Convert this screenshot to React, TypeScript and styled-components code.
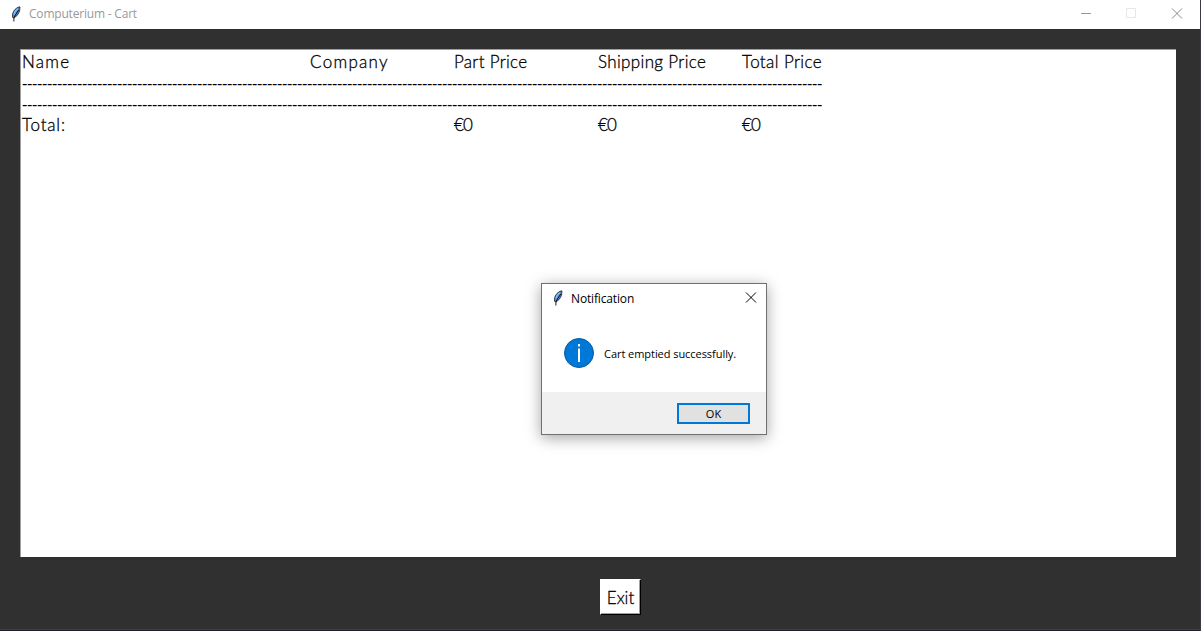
import React from "react";
import styled, { createGlobalStyle } from "styled-components";

const Global = createGlobalStyle`
  * { box-sizing: border-box; }
  html, body { margin: 0; height: 100%; overflow: hidden; background: #303030; }
`;

const Window = styled.main`
  width: 1201px;
  height: 631px;
  display: flex;
  flex-direction: column;
  background: #303030;
  border-right: 1px solid #3a3946;
  position: relative;
`;

const TitleBar = styled.header`
  height: 29px;
  flex: none;
  display: flex;
  align-items: center;
  padding: 0 17px 2px 10px;
  background: #fff;
`;

const Label = styled.span<{ $spacing?: number; $size?: number; $color?: string }>`
  font-family: "Open Sans", "Noto Sans", sans-serif;
  font-size: ${(p) => p.$size ?? 12}px;
  line-height: 16px;
  letter-spacing: ${(p) => p.$spacing ?? 0}px;
  color: ${(p) => p.$color ?? "#000"};
  white-space: pre;
`;

const WindowControls = styled.div`
  margin-left: auto;
  display: flex;
  gap: 34px;
`;

const Body = styled.section`
  flex: 1;
  display: flex;
  flex-direction: column;
  align-items: center;
  padding: 20px 24px 0 20px;
`;

const CartText = styled.div`
  width: 1156px;
  height: 508px;
  align-self: flex-start;
  padding: 2px 1px;
  background: #fff;
  border-top: 1px solid #a0a0a0;
  border-left: 1px solid #a0a0a0;
`;

const Row = styled.div`
  display: grid;
  grid-template-columns: 288px 144px 144px 144px 144px;
  height: 21px;
`;

const Cell = styled.span<{ $column?: number; $spacing?: number }>`
  grid-column: ${(p) => p.$column ?? "auto"};
  font-family: Lato, sans-serif;
  font-size: 17px;
  font-weight: 300;
  line-height: 19px;
  letter-spacing: ${(p) => p.$spacing ?? 0}px;
  color: #000;
  white-space: pre;
  -webkit-text-stroke: 0.3px #000;
`;

const Rule = styled.div`
  height: 21px;
  font-family: "Liberation Sans", sans-serif;
  font-size: 16px;
  line-height: 21px;
  letter-spacing: -0.328px;
  white-space: pre;
`;

const ExitButton = styled.button`
  width: 41px;
  height: 36px;
  margin: 22px 0 0 44px;
  padding: 2px 0 0 1px;
  border: 1px solid;
  border-color: #fff #000 #000 #fff;
  box-shadow: inset -1px -1px #a0a0a0;
  background: #fff;
  color: #000;
  font-family: Lato, sans-serif;
  font-size: 17px;
  font-weight: 300;
  line-height: 32px;
  -webkit-text-stroke: 0.3px #000;
`;

const Taskbar = styled.footer`
  height: 2px;
  background: #211c2c;
  border-top: 1px solid #403e49;
`;

const Dialog = styled.div`
  position: absolute;
  left: 541px;
  top: 283px;
  width: 226px;
  height: 152px;
  display: flex;
  flex-direction: column;
  background: #fff;
  border: 1px solid #707070;
  box-shadow: 0 3px 14px rgba(0, 0, 0, 0.36);
`;

const DialogTitle = styled.div`
  height: 30px;
  display: flex;
  align-items: center;
  padding: 0 9px 2px 10px;

  ${Label} {
    padding-top: 2px;
  }
`;

const DialogClose = styled.div`
  margin-left: auto;
  display: flex;
`;

const Message = styled.div`
  flex: 1;
  display: flex;
  align-items: center;
  gap: 10px;
  padding: 0 0 0 22px;

  ${Label} {
    padding-top: 2px;
  }
`;

const Actions = styled.div`
  height: 42px;
  display: flex;
  justify-content: flex-end;
  align-items: center;
  padding-right: 16px;
  background: #f0f0f0;
`;

const OkButton = styled.button`
  width: 73px;
  height: 21px;
  padding: 2px 0 0;
  border: 2px solid #0078d7;
  background: #e1e1e1;
  display: flex;
  align-items: center;
  justify-content: center;
`;

const Feather = styled.svg`
  width: 12px;
  height: 16px;
  margin-right: 7px;
  flex: none;
`;

function FeatherIcon() {
  return (
    <Feather viewBox="0 0 12 16">
      <path d="M9.500 .8C6.300 1.500 3.300 4.500 2.500 8.200L2.500 11.300L4.300 11.800L7.300 9.300L9.500 5.500L10 1Z" fill="#4c8ad2" stroke="#20242c" strokeWidth=".8" />
      <path d="M7.800 2.600L5.200 5.400L4 8.500" stroke="#8fc1f5" strokeWidth="1.300" fill="none" />
      <path d="M8.800 4L5.500 8.800L3.900 12V15.500" stroke="#000" strokeWidth=".9" fill="none" />
    </Feather>
  );
}

function CloseIcon({ color }: { color: string }) {
  return (
    <svg width="12" height="12" viewBox="0 0 12 12">
      <path d="M1 .5L11 10.500M11 .5L1 10.500" stroke={color} strokeWidth="1" />
    </svg>
  );
}

const dashes = "-".repeat(160);

export default function App() {
  return (
    <>
      <Global />
      <Window>
        <TitleBar>
          <FeatherIcon />
          <Label $color="#999" $spacing={-0.2}>Computerium - Cart</Label>
          <WindowControls>
            <svg width="12" height="12"><path d="M2 5.500H12" stroke="#999" /></svg>
            <svg width="12" height="12"><path d="M1.500 .5H10.500V9.500H1.500Z" stroke="#e7e7e7" fill="none" /></svg>
            <CloseIcon color="#888" />
          </WindowControls>
        </TitleBar>
        <Body>
          <CartText>
            <Row>
              <Cell $spacing={1.3}>Name</Cell>
              <Cell $spacing={1.3}>Company</Cell>
              <Cell $spacing={0.3}>Part Price</Cell>
              <Cell $spacing={0.35}>Shipping Price</Cell>
              <Cell $spacing={0.4}>Total Price</Cell>
            </Row>
            <Rule>{dashes}</Rule>
            <Rule>{dashes}</Rule>
            <Row>
              <Cell $spacing={0.8}>Total:</Cell>
              <Cell $column={3} $spacing={-0.9}>€0</Cell>
              <Cell $column={4} $spacing={-0.9}>€0</Cell>
              <Cell $column={5} $spacing={-0.9}>€0</Cell>
            </Row>
          </CartText>
          <ExitButton>Exit</ExitButton>
        </Body>
        <Taskbar />
        <Dialog role="dialog">
          <DialogTitle>
            <FeatherIcon />
            <Label $spacing={-0.15}>Notification</Label>
            <DialogClose><CloseIcon color="#000" /></DialogClose>
          </DialogTitle>
          <Message>
            <svg width="30" height="30" viewBox="0 0 30 30">
              <circle cx="15" cy="15" r="14.500" fill="#0078d7" stroke="#085a9c" />
              <path d="M15 10.500V24M15 6V8.500" stroke="#fff" strokeWidth="2" />
            </svg>
            <Label $size={11} $spacing={-0.05}>Cart emptied successfully.</Label>
          </Message>
          <Actions>
            <OkButton><Label $size={11}>OK</Label></OkButton>
          </Actions>
        </Dialog>
      </Window>
    </>
  );
}
